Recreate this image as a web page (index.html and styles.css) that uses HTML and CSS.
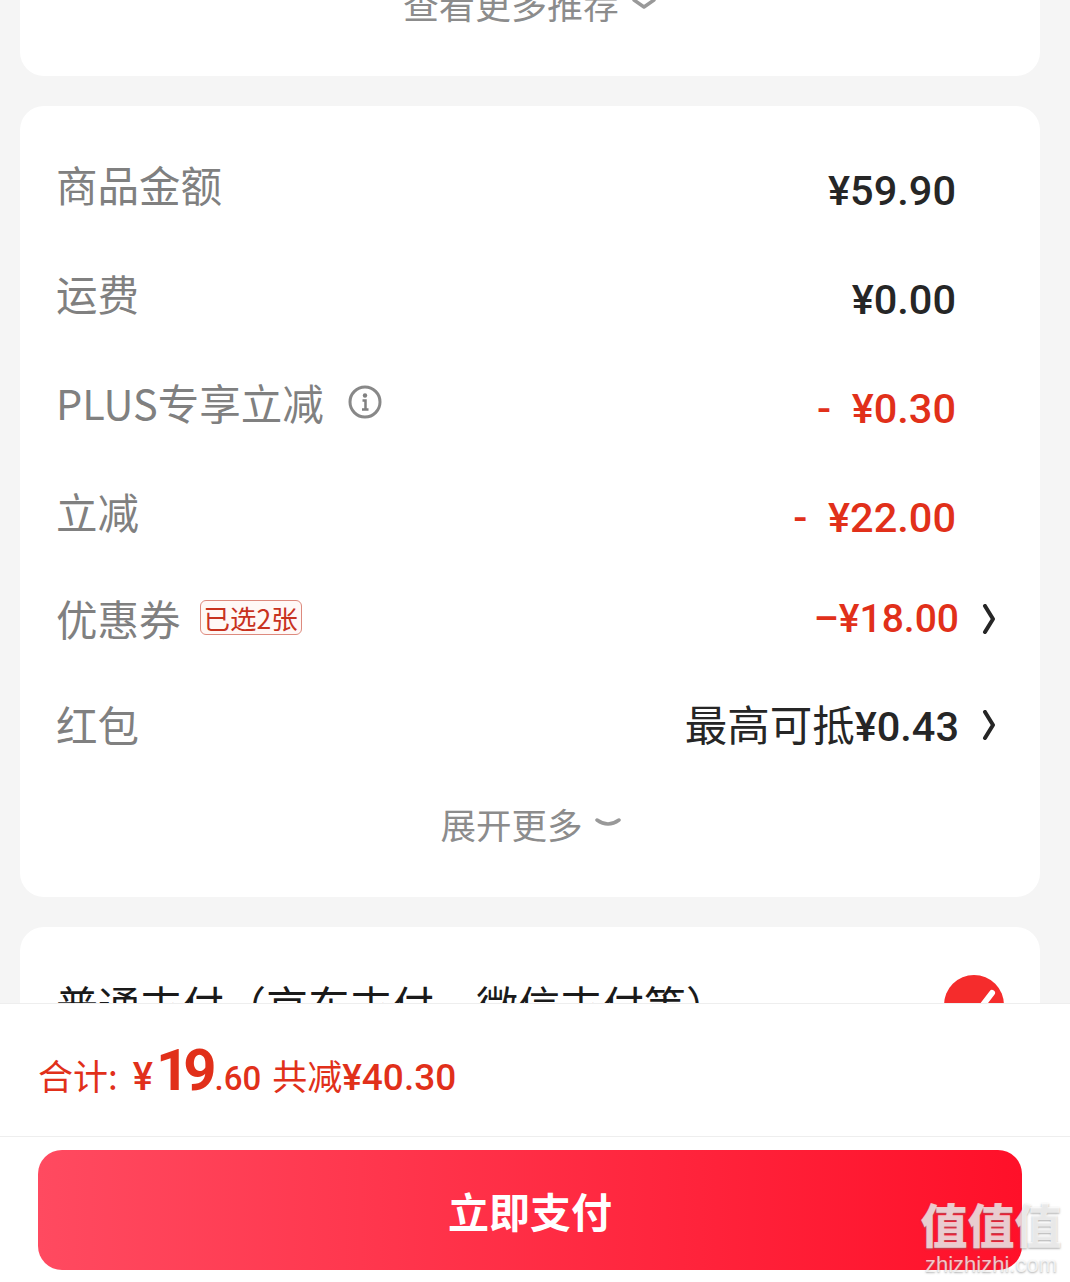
FILE: index.html
```html
<!DOCTYPE html>
<html lang="zh-CN">
<head>
  <meta charset="UTF-8" />
  <title>订单结算</title>
  <link rel="stylesheet" href="styles.css">
</head>
<body>
  <div class="page">
    <section class="card card-top">
      <div class="more more-top">
        <span>查看更多推荐</span>
        <svg class="chevron" width="26" height="12" viewBox="0 0 26 12"><path d="M3 3 L13 10 L23 3" /></svg>
      </div>
    </section>

    <section class="card card-price">
      <div class="row">
        <span class="label">商品金额</span>
        <span class="amount amount-pad">¥59.90</span>
      </div>
      <div class="row">
        <span class="label">运费</span>
        <span class="amount amount-pad">¥0.00</span>
      </div>
      <div class="row">
        <span class="label">PLUS专享立减
          <svg class="info" width="34" height="34" viewBox="0 0 34 34">
            <circle cx="17" cy="17" r="15" />
            <circle class="dot" cx="17" cy="10.5" r="2.2" />
            <path d="M14.5 15.5 H17.5 V24 M14 24.5 H20.5" />
          </svg>
        </span>
        <span class="amount amount-pad red">-&nbsp;&nbsp;¥0.30</span>
      </div>
      <div class="row">
        <span class="label">立减</span>
        <span class="amount amount-pad red">-&nbsp;&nbsp;¥22.00</span>
      </div>
      <div class="row row-short">
        <span class="label">优惠券<em class="tag">已选2张</em></span>
        <span class="amount-link">
          <span class="amount amount-small red">–¥18.00</span>
          <svg class="arrow" width="16" height="30" viewBox="0 0 16 30"><path d="M4 2 L12 15 L4 28" /></svg>
        </span>
      </div>
      <div class="row row-short">
        <span class="label">红包</span>
        <span class="amount-link">
          <span class="amount"><span class="cjk-dark">最高可抵</span>¥0.43</span>
          <svg class="arrow" width="16" height="30" viewBox="0 0 16 30"><path d="M4 2 L12 15 L4 28" /></svg>
        </span>
      </div>
      <div class="more more-price">
        <span>展开更多</span>
        <svg class="chevron" width="26" height="12" viewBox="0 0 26 12"><path d="M2 2 Q13 10 24 2" /></svg>
      </div>
    </section>

    <section class="card card-pay">
      <span class="pay-name">普通支付（京东支付、微信支付等）</span>
      <svg class="pay-check" width="60" height="60" viewBox="0 0 60 60">
        <circle cx="30" cy="30" r="30" />
        <path d="M15 33 L28 44 L48 18" />
      </svg>
    </section>

    <footer class="footer">
      <div class="total">
        <span class="total-label">合计:</span>
        <span class="total-yen">¥</span><span class="total-big">19</span><span class="total-cents">.60</span>
        <span class="total-save"><span class="total-label">共减</span>¥40.30</span>
      </div>
      <div class="action">
        <button class="pay-btn">立即支付</button>
      </div>
    </footer>

    <div class="watermark">
      <div class="wm-name">值值值</div>
      <div class="wm-url">zhizhizhi.com</div>
    </div>
  </div>
</body>
</html>
```

FILE: styles.css
```css
html, body {
  margin: 0;
  padding: 0;
}
body {
  background-color: #F5F5F5;
  font-family: "Noto Sans CJK SC", "Noto Sans", sans-serif;
}
.page {
  position: relative;
  height: 1282px;
  overflow: hidden;
  display: flex;
  flex-direction: column;
  gap: 30px;
}
.card {
  background: white;
  border-radius: 24px;
  margin: 0 30px 0 20px;
  flex-shrink: 0;
}
.card-top {
  height: 106px;
  margin-top: -30px;
  box-sizing: border-box;
}
.more {
  display: flex;
  justify-content: center;
  align-items: center;
  gap: 12px;
  color: #8C8C8C;
  font-size: 36px;
  line-height: 50px;
}
.more-top {
  padding-top: 8px;
}
.more-price {
  margin: 18px 0 0 9px;
  font-size: 35.5px;
}
.chevron path {
  fill: none;
  stroke: #999999;
  stroke-width: 3.5;
  stroke-linecap: round;
  stroke-linejoin: round;
}
.card-price {
  height: 791px;
  box-sizing: border-box;
  padding: 27px 44px 0 36px;
}
.row {
  display: flex;
  justify-content: space-between;
  align-items: center;
  height: 109px;
}
.row-short {
  height: 106px;
}
.label {
  display: flex;
  align-items: center;
  color: #808080;
  font-size: 41.5px;
  line-height: 54px;
  margin-top: -8px;
}
.info {
  margin-left: 24px;
}
.info circle {
  fill: none;
  stroke: #888888;
  stroke-width: 3;
}
.info .dot {
  fill: #808080;
  stroke: none;
}
.info path {
  fill: none;
  stroke: #808080;
  stroke-width: 2.5;
}
.tag {
  font-style: normal;
  font-size: 26.5px;
  line-height: 33px;
  color: #C8321E;
  background: #FFF8F6;
  border: 1px solid #DD8A7E;
  border-radius: 6px;
  padding: 0 3px;
  margin: -2px 0 0 19px;
}
.amount {
  font-family: Roboto, "Noto Sans CJK SC", sans-serif;
  font-size: 41.5px;
  font-weight: 500;
  color: #262626;
  line-height: 50px;
}
.amount-small {
  font-size: 39px;
  color: #E1301A;
}
.amount-pad {
  margin: 7px 40px 0 0;
}
.red {
  color: #E1301A;
}
.cjk-dark {
  font-family: "Noto Sans CJK SC", sans-serif;
  font-weight: 400;
  font-size: 42.5px;
}
.amount-link {
  display: flex;
  align-items: center;
  gap: 22px;
  margin-right: -1px;
  margin-top: -7px;
}
.arrow path {
  fill: none;
  stroke: #262626;
  stroke-width: 4;
  stroke-linecap: round;
  stroke-linejoin: round;
}
.card-pay {
  height: 200px;
  display: flex;
  justify-content: space-between;
  align-items: flex-start;
  padding: 48px 36px 0;
  box-sizing: border-box;
}
.pay-name {
  color: #1A1A1A;
  font-size: 42px;
  line-height: 50px;
  margin-top: 4px;
}
.pay-check circle {
  fill: #F52C2C;
}
.pay-check path {
  fill: none;
  stroke: white;
  stroke-width: 6;
  stroke-linecap: round;
}
.footer {
  position: absolute;
  left: 0;
  right: 0;
  bottom: 0;
  height: 279px;
  background: white;
  border-top: 1px solid #EEEEEE;
  box-sizing: border-box;
}
.total {
  display: flex;
  align-items: baseline;
  height: 106px;
  padding: 26px 0 0 38px;
  border-bottom: 1px solid #EEEEEE;
  color: #E1301A;
  font-family: Roboto, "Noto Sans CJK SC", sans-serif;
  line-height: 80px;
}
.total-label {
  font-family: "Noto Sans CJK SC", sans-serif;
  font-size: 35px;
  font-weight: 400;
}
.total-yen {
  font-size: 38px;
  font-weight: 500;
  margin-left: 15px;
}
.total-big {
  font-size: 58px;
  font-weight: 700;
  letter-spacing: -6px;
  margin-left: 3px;
}
.total-cents {
  font-size: 33px;
  font-weight: 500;
  margin-left: 4px;
}
.total-save {
  font-size: 37px;
  font-weight: 500;
  margin-left: 11px;
}
.action {
  padding: 13px 48px 0 38px;
}
.pay-btn {
  display: block;
  width: 100%;
  height: 120px;
  border: none;
  border-radius: 24px;
  background: linear-gradient(90deg, #FF4A60 0%, #FF1029 100%);
  color: white;
  font-family: "Noto Sans CJK SC", sans-serif;
  font-size: 41px;
  font-weight: 700;
}
.watermark {
  position: absolute;
  right: 8px;
  bottom: 6px;
  width: 142px;
  text-align: center;
  white-space: nowrap;
  color: rgba(255, 255, 255, 0.72);
  text-shadow: 0 1px 2px rgba(120, 120, 120, 0.6);
}
.wm-name {
  font-size: 47px;
  font-weight: 900;
  line-height: 52px;
  margin-bottom: 5px;
}
.wm-url {
  font-family: "Liberation Sans", sans-serif;
  font-size: 22px;
  line-height: 22px;
}
```
